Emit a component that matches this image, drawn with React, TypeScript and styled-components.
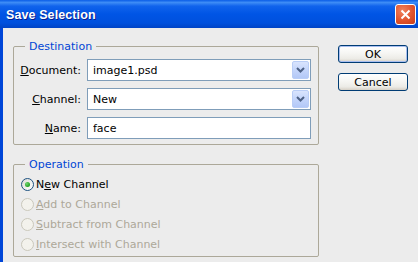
import React from 'react'
import styled, { createGlobalStyle } from 'styled-components'

const GlobalStyle = createGlobalStyle`
  html, body {
    margin: 0;
    padding: 0;
    background: #ececec;
  }
  * {
    box-sizing: border-box;
  }
`

const Window = styled.div`
  width: 418px;
  height: 262px;
  overflow: hidden;
  background: #0046d8;
  font-family: 'DejaVu Sans', 'Liberation Sans', sans-serif;
  font-size: 11px;
  color: #000;
`

const TitleBar = styled.div`
  height: 28px;
  display: flex;
  align-items: center;
  justify-content: space-between;
  padding: 1px 2px 0 6px;
  background: linear-gradient(
    to bottom,
    #0a5de7 0%,
    #3d8cf6 9%,
    #1063ec 22%,
    #0055e5 50%,
    #0050dd 82%,
    #0044c6 100%
  );
`

const Title = styled.div`
  font-family: 'Liberation Sans', Arial, sans-serif;
  font-weight: bold;
  font-size: 12.5px;
  color: #fff;
  text-shadow: 1px 1px 0 #0a1e8c;
  letter-spacing: 0.1px;
`

const CloseButton = styled.div`
  width: 21px;
  height: 21px;
  border: 1px solid #fff;
  border-radius: 3px;
  background: radial-gradient(circle at 35% 30%, #f0825e 0%, #e0532d 55%, #c63d19 100%);
  display: flex;
  align-items: center;
  justify-content: center;
`

const Body = styled.div`
  margin-left: 3px;
  height: 234px;
  background: #ececec;
  display: flex;
  gap: 19px;
  padding: 12px 0 0 10px;
`

const LeftColumn = styled.div`
  width: 306px;
  display: flex;
  flex-direction: column;
  gap: 13px;
`

const GroupBox = styled.fieldset<{ pad: string }>`
  margin: 0;
  padding: ${({ pad }) => pad};
  border: 1px solid #aca899;
  border-radius: 2px;
  min-inline-size: 0;
`

const Legend = styled.legend`
  margin-left: 11px;
  padding: 0 4px;
  line-height: 13px;
  color: #0046d5;
`

const FieldGrid = styled.div`
  display: grid;
  grid-template-columns: 67px 224px;
  column-gap: 6px;
  row-gap: 7px;
  align-items: center;
`

const Label = styled.label`
  text-align: right;
  white-space: nowrap;
`

const Field = styled.div`
  height: 22px;
  background: #fff;
  border: 1px solid #7f9db9;
  display: flex;
  align-items: center;
  justify-content: space-between;
  padding: 0 1px 0 5px;
`

const TextInput = styled.input`
  height: 22px;
  width: 224px;
  background: #fff;
  border: 1px solid #7f9db9;
  padding: 0 5px;
  font: inherit;
  color: #000;
  outline: none;
`

const DropButton = styled.div`
  width: 17px;
  height: 18px;
  border: 1px solid #b9cdf6;
  border-radius: 2px;
  background: linear-gradient(to bottom, #d9e4fd 0%, #c4d5fb 50%, #b3c8f7 100%);
  display: flex;
  align-items: center;
  justify-content: center;
`

const RadioList = styled.div`
  display: flex;
  flex-direction: column;
`

const RadioRow = styled.div<{ disabled?: boolean }>`
  height: 20px;
  display: flex;
  align-items: center;
  gap: 2px;
  padding-left: 7px;
  color: ${({ disabled }) => (disabled ? '#aca899' : '#000')};
`

const RadioCircle = styled.span<{ checked?: boolean; disabled?: boolean }>`
  width: 13px;
  height: 13px;
  border-radius: 50%;
  flex: none;
  border: 1px solid ${({ disabled }) => (disabled ? '#cac8bb' : '#1c5180')};
  background: ${({ disabled }) =>
    disabled ? '#f3f2ec' : 'linear-gradient(135deg, #dcdcd6 0%, #ffffff 100%)'};
  display: flex;
  align-items: center;
  justify-content: center;

  ${({ checked }) =>
    checked &&
    `
    &::after {
      content: '';
      width: 5px;
      height: 5px;
      border-radius: 50%;
      background: radial-gradient(circle at 35% 35%, #6fd36f 0%, #21a121 70%, #1a8a1a 100%);
    }
  `}
`

const ButtonColumn = styled.div`
  display: flex;
  flex-direction: column;
  gap: 10px;
  margin-top: 5px;
`

const PushButton = styled.div<{ isDefault?: boolean }>`
  width: 70px;
  height: 18px;
  border: 1px solid #003c74;
  border-radius: 3px;
  background: linear-gradient(to bottom, #ffffff 0%, #f6f6f3 45%, #ecebe6 80%, #d6d0c5 100%);
  display: flex;
  align-items: center;
  justify-content: center;
  line-height: 1;

  ${({ isDefault }) =>
    isDefault &&
    `
    box-shadow: inset 0 0 0 1px #a9bff0;
  `}
`

const radios = [
  { id: 'new', pre: 'N', key: 'e', rest: 'w Channel', checked: true },
  { id: 'add', pre: '', key: 'A', rest: 'dd to Channel' },
  { id: 'sub', pre: '', key: 'S', rest: 'ubtract from Channel' },
  { id: 'int', pre: '', key: 'I', rest: 'ntersect with Channel' },
]

function Chevron() {
  return (
    <svg width="9" height="6" viewBox="0 0 9 6">
      <path d="M1 1 L4.5 4.5 L8 1" fill="none" stroke="#4d6185" strokeWidth="2" />
    </svg>
  )
}

function App() {
  return (
    <>
      <GlobalStyle />
      <Window>
        <TitleBar>
          <Title>Save Selection</Title>
          <CloseButton>
            <svg width="11" height="11" viewBox="0 0 11 11">
              <path d="M1.5 1.5 L9.5 9.5 M9.5 1.5 L1.5 9.5" stroke="#fff" strokeWidth="2" />
            </svg>
          </CloseButton>
        </TitleBar>
        <Body>
          <LeftColumn>
            <GroupBox pad="6px 0 5px 0">
              <Legend>Destination</Legend>
              <FieldGrid>
                <Label>
                  <u>D</u>ocument:
                </Label>
                <Field>
                  <span>image1.psd</span>
                  <DropButton>
                    <Chevron />
                  </DropButton>
                </Field>
                <Label>
                  <u>C</u>hannel:
                </Label>
                <Field>
                  <span>New</span>
                  <DropButton>
                    <Chevron />
                  </DropButton>
                </Field>
                <Label>
                  <u>N</u>ame:
                </Label>
                <TextInput defaultValue="face" />
              </FieldGrid>
            </GroupBox>
            <GroupBox pad="3px 0 2px 0">
              <Legend>Operation</Legend>
              <RadioList>
                {radios.map(({ id, pre, key, rest, checked }) => (
                  <RadioRow key={id} disabled={!checked}>
                    <RadioCircle checked={checked} disabled={!checked} />
                    <span>
                      {pre}
                      <u>{key}</u>
                      {rest}
                    </span>
                  </RadioRow>
                ))}
              </RadioList>
            </GroupBox>
          </LeftColumn>
          <ButtonColumn>
            <PushButton isDefault>OK</PushButton>
            <PushButton>Cancel</PushButton>
          </ButtonColumn>
        </Body>
      </Window>
    </>
  )
}

export default App
